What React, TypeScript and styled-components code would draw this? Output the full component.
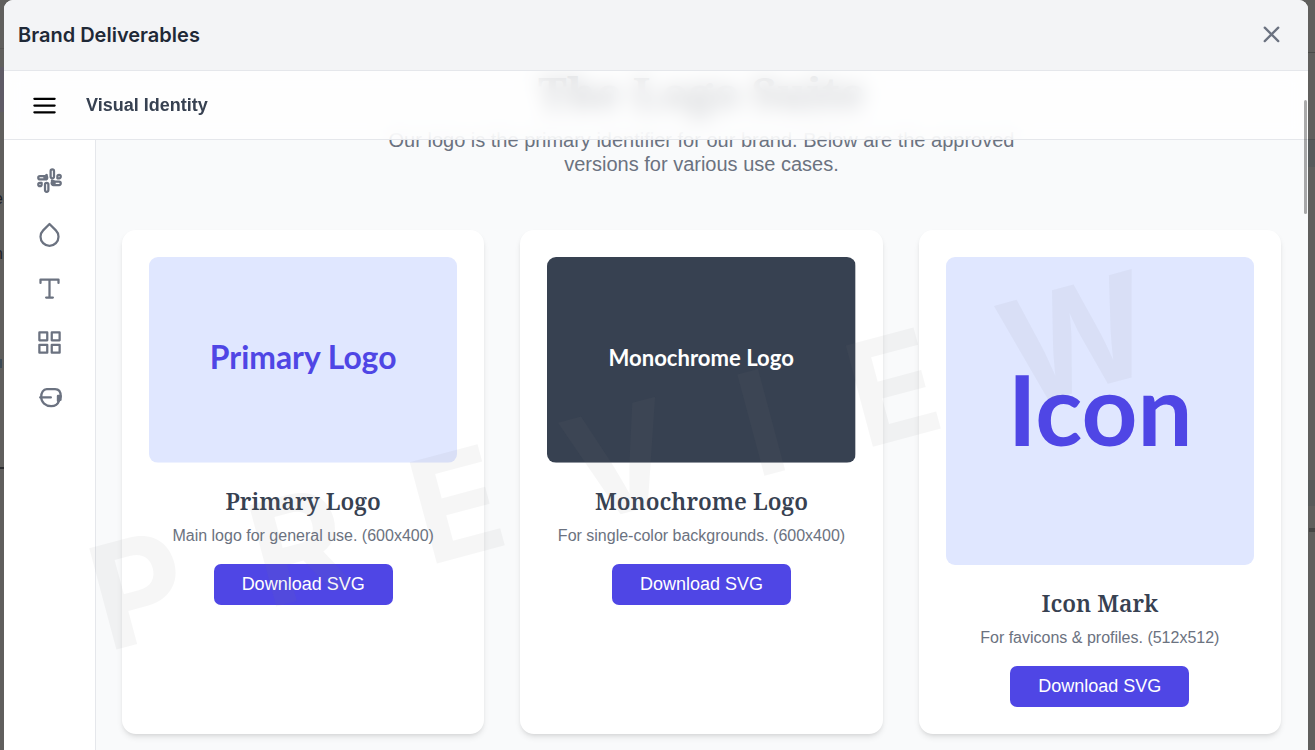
import React from "react";
import styled, { createGlobalStyle } from "styled-components";

const sans = '"Liberation Sans", Arial, sans-serif';
const serif = '"Noto Serif", Georgia, serif';

const GlobalStyle = createGlobalStyle`
  *, *::before, *::after { box-sizing: border-box; }
  html, body, #root { height: 100%; }
  body { margin: 0; background: #605f5d; font-family: ${sans}; overflow: hidden; }
  h1, h2, h3, p { margin: 0; }
  button { font: inherit; border: 0; cursor: pointer; }
`;

const Backdrop = styled.div`
  position: relative;
  height: 100vh;
  padding: 0 7px 0 4px;
  background:
    linear-gradient(#5f5b66, #5f5b66) 0 67px / 4px 45px no-repeat,
    linear-gradient(#565553, #565553) 0 48px / 4px 1px no-repeat,
    linear-gradient(#2b2c30, #2b2c30) 0 467px / 4px 2px no-repeat,
    linear-gradient(#3c4a55, #3c4a55) 0 359px / 2px 9px no-repeat,
    linear-gradient(#4a4a49, #4a4a49) 100% 52px / 7px 1px no-repeat,
    linear-gradient(#4f5152, #4f5152) 100% 139px / 7px 1px no-repeat,
    linear-gradient(#575a5b, #575a5b) 100% 140px / 7px 27px no-repeat,
    linear-gradient(#585a5a, #585a5a) 100% 480px / 7px 26px no-repeat,
    linear-gradient(#454544, #454544) 100% 528px / 6px 4px no-repeat,
    #605f5d;
  overflow: hidden;
`;

const PageRemnant = styled.span<{ $top: number }>`
  position: absolute;
  top: ${(p) => p.$top}px;
  left: -6px;
  font-size: 16px;
  line-height: 20px;
  color: #1c2026;
`;

const Dialog = styled.section`
  position: relative;
  display: flex;
  flex-direction: column;
  height: 100%;
  border-radius: 9px 9px 0 0;
  background: #f9fafb;
  overflow: hidden;
`;

const DialogHeader = styled.header`
  display: flex;
  flex: none;
  align-items: center;
  justify-content: space-between;
  height: 71px;
  padding: 0 23px 0 14px;
  border-bottom: 1px solid #e5e7eb;
  background: #f3f4f6;
`;

const DialogTitle = styled.h1`
  font: 600 20px/28px Inter, sans-serif;
  color: #1f2937;
`;

const IconButton = styled.button<{ $color: string }>`
  display: flex;
  padding: 0;
  background: none;
  color: ${(p) => p.$color};
`;

const Guide = styled.div`
  position: relative;
  flex: 1;
  min-height: 0;
  overflow: hidden;
`;

const TopBar = styled.header`
  position: relative;
  z-index: 2;
  display: flex;
  align-items: center;
  gap: 28px;
  height: 69px;
  padding: 0 27px;
  border-bottom: 1px solid #e5e7eb;
  background: rgba(255, 255, 255, 0.8);
  backdrop-filter: blur(10px);
`;

const SectionName = styled.h2`
  font-size: 18px;
  line-height: 28px;
  font-weight: 700;
  color: #374151;
`;

const Columns = styled.div`
  display: grid;
  grid-template-columns: 92px 1fr;
  height: calc(100% - 69px);
`;

const Sidebar = styled.nav`
  display: flex;
  flex-direction: column;
  align-items: center;
  gap: 27px;
  padding-top: 27px;
  border-right: 1px solid #e5e7eb;
  background: #fff;
`;

const NavLink = styled.a`
  display: flex;
  color: #6b7280;
`;

const Content = styled.main`
  margin-top: -73px;
  padding: 0 27px 0 26px;
`;

const Intro = styled.div`
  text-align: center;
  margin-bottom: 54px;
`;

const SuiteTitle = styled.h2`
  font: 700 44px/50px ${serif};
  color: #1f2937;
`;

const SuiteText = styled.p`
  max-width: 648px;
  margin: 11px auto 0;
  font-size: 20px;
  line-height: 24px;
  color: #6b7280;
`;

const CardGrid = styled.div`
  display: grid;
  grid-template-columns: repeat(3, 1fr);
  gap: 36px;
`;

const Card = styled.article`
  padding: 27px;
  border-radius: 14px;
  background: #fff;
  text-align: center;
  box-shadow: 0 4px 6px -1px rgba(0, 0, 0, 0.1), 0 2px 4px -2px rgba(0, 0, 0, 0.1);
`;

const LogoArt = styled.svg`
  display: block;
  width: 100%;
  height: auto;
  margin-bottom: 22px;
  border-radius: 9px;
`;

const CardTitle = styled.h3`
  font: 600 23px/32px ${serif};
  color: #374151;
`;

const CardText = styled.p`
  margin: 7px 0 16px;
  font-size: 16px;
  line-height: 24px;
  color: #6b7280;
`;

const Download = styled.button`
  padding: 0 28px;
  border-radius: 7px;
  background: #4f46e5;
  color: #fff;
  font-size: 18px;
  line-height: 41px;
`;

const Watermark = styled.div`
  position: absolute;
  z-index: 3;
  left: 50%;
  top: 380px;
  transform: translate(-50%, -50%) rotate(-15deg);
  font: 700 144px/1 Inter, sans-serif;
  letter-spacing: 0.5em;
  white-space: nowrap;
  color: rgba(128, 128, 128, 0.07);
  pointer-events: none;
`;

const ScrollThumb = styled.div`
  position: absolute;
  z-index: 4;
  top: 29px;
  right: 1px;
  width: 3px;
  height: 114px;
  border-radius: 2px;
  background: rgba(0, 0, 0, 0.33);
`;

const NavIcon = ({ children }: { children: React.ReactNode }) => (
  <svg width="27" height="27" viewBox="0 0 24 24" fill="none" stroke="currentColor" strokeWidth="2" strokeLinecap="round" strokeLinejoin="round">
    {children}
  </svg>
);

const navItems = [
  {
    name: "Logos",
    icon: (
      <>
        <path d="M14.5 10c-.83 0-1.5-.67-1.5-1.5v-5c0-.83.67-1.5 1.5-1.5s1.5.67 1.5 1.5v5c0 .83-.67 1.5-1.5 1.5z" />
        <path d="M20.5 10H19V8.5c0-.83.67-1.5 1.5-1.5s1.5.67 1.5 1.5-.67 1.5-1.5 1.5z" />
        <path d="M9.5 14c.83 0 1.5.67 1.5 1.5v5c0 .83-.67 1.5-1.5 1.5S8 21.33 8 20.5v-5c0-.83.67-1.5 1.5-1.5z" />
        <path d="M3.5 14H5v1.5c0 .83-.67 1.5-1.5 1.5S2 16.33 2 15.5 2.67 14 3.5 14z" />
        <path d="M14 14.5c0-.83.67-1.5 1.5-1.5h5c.83 0 1.5.67 1.5 1.5s-.67 1.5-1.5 1.5h-5c-.83 0-1.5-.67-1.5-1.5z" />
        <path d="M10 9.5C10 8.67 9.33 8 8.5 8h-5C2.67 8 2 8.67 2 9.5S2.67 11 3.5 11h5c.83 0 1.5-.67 1.5-1.5z" />
        <path fill="currentColor" d="M7.5 8.5 9.5 7v3h-2z" />
        <path fill="currentColor" d="M14.2 12v3h2.3v-1.8z" />
      </>
    ),
  },
  { name: "Colors", icon: <path d="M12 2.69l5.66 5.66a8 8 0 1 1-11.31 0z" /> },
  { name: "Typography", icon: <path d="M4 7V4h16v3M9 20h6M12 4v16" /> },
  { name: "Components", icon: <path d="M3 3h7v7H3zM14 3h7v7h-7zM14 14h7v7h-7zM3 14h7v7H3z" /> },
  {
    name: "Voice",
    icon: (
      <>
        <path d="M3.7 12.8h9.5" />
        <path d="M9.5 5.5H17c3.5 0 5 2.8 5 6.5l-1.5 3.8c-1 2.8-3.500 4.700-7 4.700-5 0-8.900-3.300-8.900-8C4.600 8.300 6.600 5.500 9.500 5.500z" />
        <path fill="currentColor" d="M19.5 11.5h2.300v3.300l-2.300 1z" />
      </>
    ),
  },
];

const cards = [
  { title: "Primary Logo", text: "Main logo for general use. (600x400)", art: "Primary Logo", w: 600, h: 400, bg: "#e0e7ff", fg: "#4f46e5", size: 62, baseline: 218 },
  { title: "Monochrome Logo", text: "For single-color backgrounds. (600x400)", art: "Monochrome Logo", w: 600, h: 400, bg: "#374151", fg: "#ffffff", size: 43, baseline: 213 },
  { title: "Icon Mark", text: "For favicons & profiles. (512x512)", art: "Icon", w: 512, h: 512, bg: "#e0e7ff", fg: "#4f46e5", size: 162, baseline: 314 },
];

export default function App() {
  return (
    <Backdrop>
      <GlobalStyle />
      <PageRemnant $top={189} aria-hidden="true">e</PageRemnant>
      <PageRemnant $top={244} aria-hidden="true">n</PageRemnant>
      <Dialog>
        <DialogHeader>
          <DialogTitle>Brand Deliverables</DialogTitle>
          <IconButton type="button" aria-label="Close" $color="#6b7280">
            <svg width="27" height="27" viewBox="0 0 24 24" fill="none" stroke="currentColor" strokeWidth="2" strokeLinecap="round">
              <path d="M18 5L6 17M6 5l12 12" />
            </svg>
          </IconButton>
        </DialogHeader>
        <Guide>
          <TopBar>
            <IconButton type="button" aria-label="Menu" $color="#000">
              <svg width="27" height="27" viewBox="0 0 24 24" fill="none" stroke="currentColor" strokeWidth="2" strokeLinecap="round">
                <path d="M3 6h18M3 12h18M3 18h18" />
              </svg>
            </IconButton>
            <SectionName>Visual Identity</SectionName>
          </TopBar>
          <Columns>
            <Sidebar>
              {navItems.map((item) => (
                <NavLink key={item.name} href="#" aria-label={item.name}>
                  <NavIcon>{item.icon}</NavIcon>
                </NavLink>
              ))}
            </Sidebar>
            <Content>
              <Intro>
                <SuiteTitle>The Logo Suite</SuiteTitle>
                <SuiteText>Our logo is the primary identifier for our brand. Below are the approved versions for various use cases.</SuiteText>
              </Intro>
              <CardGrid>
                {cards.map((c) => (
                  <Card key={c.title}>
                    <LogoArt viewBox={`0 0 ${c.w} ${c.h}`}>
                      <rect width={c.w} height={c.h} fill={c.bg} />
                      <text x={c.w / 2} y={c.baseline} textAnchor="middle" fontFamily="Lato, sans-serif" fontWeight="700" fontSize={c.size} fill={c.fg}>
                        {c.art}
                      </text>
                    </LogoArt>
                    <CardTitle>{c.title}</CardTitle>
                    <CardText>{c.text}</CardText>
                    <Download type="button">Download SVG</Download>
                  </Card>
                ))}
              </CardGrid>
            </Content>
          </Columns>
          <Watermark aria-hidden="true">PREVIEW</Watermark>
          <ScrollThumb />
        </Guide>
      </Dialog>
    </Backdrop>
  );
}
